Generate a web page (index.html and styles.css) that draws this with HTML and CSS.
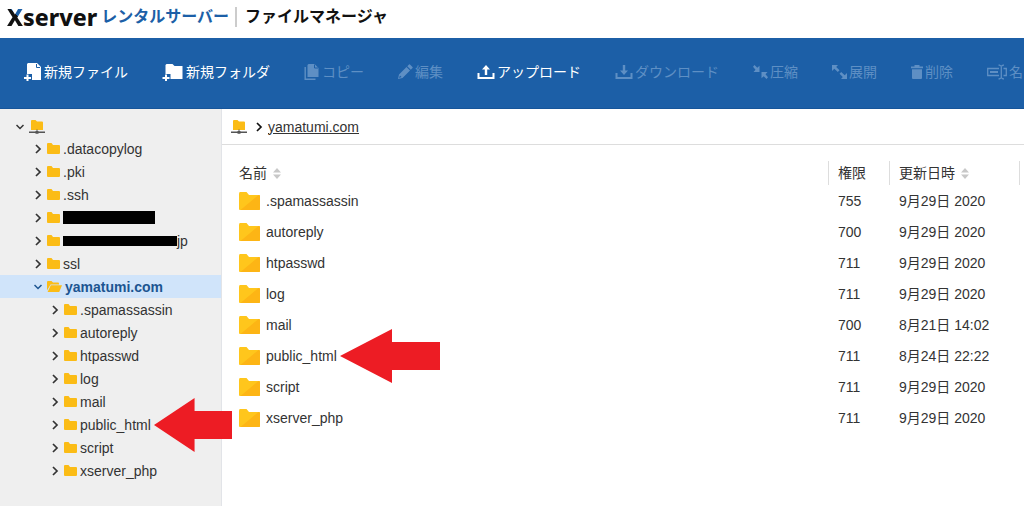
FILE: index.html
```
<!doctype html>
<html lang="ja">
<head>
  <meta charset="UTF-8">
  <title>ファイルマネージャ</title>
  <link rel="stylesheet" href="styles.css">
</head>
<body>
<svg class="defs" width="0" height="0" aria-hidden="true">
  <symbol id="i-folder" viewBox="0 0 13 11">
    <path d="M0 1Q0 0 1 0H4.500L6 2H12Q13 2 13 3V10Q13 11 12 11H1Q0 11 0 10Z" fill="#fbbc16"/>
  </symbol>
  <symbol id="i-open" viewBox="0 0 15 11">
    <path d="M0 1Q0 0 1 0H4.500L6 1.500H11Q12 1.500 12 2.500V3.500H3.500L0 9.500Z" fill="#fbbc16"/>
    <path d="M3.800 4.300H15L12.200 11H.6Z" fill="#fbbc16"/>
  </symbol>
  <symbol id="i-root" viewBox="0 0 16 14">
    <path d="M2 1Q2 0 3 0H6.500L8 1.500H13Q14 1.500 14 2.500V10H2Z" fill="#fbbc16"/>
    <path d="M7.500 9.500H8.500V11.500H7.500ZM0 11.500H16V13H0ZM6.500 11H9.500V13.700H6.500Z" fill="#555"/>
  </symbol>
  <symbol id="i-big" viewBox="0 0 21 18">
    <path d="M0 2Q0 0 1 0H7.500L10 3H20Q21 3 21 4V17Q21 18 20 18H1Q0 18 0 17Z" fill="#ffc61c"/>
    <path d="M21 4V17Q21 18 20 18H1.500L19.500 3Q21 3 21 4Z" fill="#fdb515"/>
  </symbol>
  <symbol id="i-right" viewBox="0 0 8 10">
    <path d="M2 1L6 5L2 9" fill="none" stroke="currentColor" stroke-width="1.700"/>
  </symbol>
  <symbol id="i-down" viewBox="0 0 8 10">
    <path d="M.5 3L4 6.500L7.500 3" fill="none" stroke="currentColor" stroke-width="1.500"/>
  </symbol>
  <symbol id="i-sort" viewBox="0 0 8 11">
    <path d="M0 4.500L4 0L8 4.500ZM0 6.500L4 11L8 6.500Z" fill="#c8c8c8"/>
  </symbol>
  <symbol id="i-arrow" viewBox="0 0 100 54" preserveAspectRatio="none">
    <path d="M0 27L52 0V13H100V41H52V54Z" fill="#ed1c24"/>
  </symbol>
</svg>

<header class="header">
  <span class="logo"><span class="logo-x">X</span>server</span>
  <span class="service">レンタルサーバー</span>
  <h1 class="title">ファイルマネージャ</h1>
</header>

<nav class="toolbar">
  <button type="button" class="tool">
    <svg width="18" height="18" viewBox="0 0 18 18"><path d="M4 0H13L17 4V17H8V11H3V1Z"/><path d="M12.500 1V4.500H16" fill="none" stroke="#1c5fa7"/><path d="M2.500 11.500H4.500V14H7V16H4.500V18H2.500V16H0V14H2.500Z"/></svg>
    新規ファイル
  </button>
  <button type="button" class="tool">
    <svg width="22" height="18" viewBox="0 0 21 18"><path d="M4 1H10L12 3H20V16H8V11H3V2Z"/><path d="M2.500 11.500H4.500V14H7V16H4.500V18H2.500V16H0V14H2.500Z"/></svg>
    新規フォルダ
  </button>
  <button type="button" class="tool" disabled>
    <svg width="16" height="16" viewBox="0 0 15 16"><path d="M4 0H10L14 4V13H3V1Z"/><path d="M.7 3V15.300H11" fill="none" stroke="currentColor" stroke-width="1.400"/><path d="M10 .5V4H13.500" fill="none" stroke="#1c5fa7"/></svg>
    コピー
  </button>
  <button type="button" class="tool" disabled>
    <svg width="15" height="16" viewBox="0 0 15 16"><path d="M0 15L1 10.500L8.500 3L12 6.500L4.500 14ZM9.300 2.200L11 .5Q11.500 0 12 .5L14.500 3Q15 3.500 14.500 4L12.800 5.700Z"/><path d="M1 14L2 11.500L3.500 13Z" fill="#1c5fa7"/></svg>
    編集
  </button>
  <button type="button" class="tool">
    <svg width="18" height="16" viewBox="0 0 17 16"><path d="M0 9H2V13H15V9H17V15H0ZM8.500 1L12.500 5.500H9.700V11H7.300V5.500H4.500Z"/></svg>
    アップロード
  </button>
  <button type="button" class="tool" disabled>
    <svg width="18" height="16" viewBox="0 0 17 16"><path d="M0 9H2V13H15V9H17V15H0ZM8.500 11L12.500 6.500H9.700V1H7.300V6.500H4.500Z"/></svg>
    ダウンロード
  </button>
  <button type="button" class="tool" disabled>
    <svg width="15" height="16" viewBox="0 0 15 16"><path d="M1.500 1L4.300 3.800L6.500 1.800V8H.5L2.500 5.700L0 2.800ZM13.500 15L10.700 12.200L8.500 14.200V8H14.500L12.500 10.300L15 13.200Z"/></svg>
    圧縮
  </button>
  <button type="button" class="tool" disabled>
    <svg width="15" height="16" viewBox="0 0 15 16"><path d="M0 1H6L4.200 3L7.500 6.300L5.800 8L2.300 4.800L0 7ZM15 15H9L10.800 13L7.500 9.700L9.200 8L12.700 11.200L15 9Z"/></svg>
    展開
  </button>
  <button type="button" class="tool" disabled>
    <svg width="12" height="16" viewBox="0 0 12 16"><path d="M0 2.500H3.500V1H8.500V2.500H12V4.300H0ZM1 5.300H11V14Q11 15 10 15H2Q1 15 1 14Z"/></svg>
    削除
  </button>
  <button type="button" class="tool" disabled>
    <svg width="20" height="16" viewBox="0 0 20 16"><path d="M12 4.500H.7V11.500H12M16.500 4.500H19.300V11.500H16.500M11.500 1.200H12.500L14.300 2.200L16 1.200H17M14.300 2V14M11.500 14.800H12.500L14.300 13.800L16 14.800H17" fill="none" stroke="currentColor" stroke-width="1.300"/><path d="M3 7H11V9H3Z"/></svg>
    名
  </button>
</nav>

<div class="content">
  <aside class="sidebar">
    <div class="node root">
      <svg class="chev"><use href="#i-down"/></svg>
      <svg class="root-icon"><use href="#i-root"/></svg>
    </div>
    <ul class="tree">
      <li class="node"><svg class="chev"><use href="#i-right"/></svg><svg class="folder"><use href="#i-folder"/></svg><a href="#">.datacopylog</a></li>
      <li class="node"><svg class="chev"><use href="#i-right"/></svg><svg class="folder"><use href="#i-folder"/></svg><a href="#">.pki</a></li>
      <li class="node"><svg class="chev"><use href="#i-right"/></svg><svg class="folder"><use href="#i-folder"/></svg><a href="#">.ssh</a></li>
      <li class="node"><svg class="chev"><use href="#i-right"/></svg><svg class="folder"><use href="#i-folder"/></svg><span class="mask"></span></li>
      <li class="node"><svg class="chev"><use href="#i-right"/></svg><svg class="folder"><use href="#i-folder"/></svg><span class="mask mask-long"></span><a href="#">jp</a></li>
      <li class="node"><svg class="chev"><use href="#i-right"/></svg><svg class="folder"><use href="#i-folder"/></svg><a href="#">ssl</a></li>
      <li class="node selected"><svg class="chev"><use href="#i-down"/></svg><svg class="folder open"><use href="#i-open"/></svg><a href="#">yamatumi.com</a></li>
    </ul>
    <ul class="tree sub">
      <li class="node"><svg class="chev"><use href="#i-right"/></svg><svg class="folder"><use href="#i-folder"/></svg><a href="#">.spamassassin</a></li>
      <li class="node"><svg class="chev"><use href="#i-right"/></svg><svg class="folder"><use href="#i-folder"/></svg><a href="#">autoreply</a></li>
      <li class="node"><svg class="chev"><use href="#i-right"/></svg><svg class="folder"><use href="#i-folder"/></svg><a href="#">htpasswd</a></li>
      <li class="node"><svg class="chev"><use href="#i-right"/></svg><svg class="folder"><use href="#i-folder"/></svg><a href="#">log</a></li>
      <li class="node"><svg class="chev"><use href="#i-right"/></svg><svg class="folder"><use href="#i-folder"/></svg><a href="#">mail</a></li>
      <li class="node"><svg class="chev"><use href="#i-right"/></svg><svg class="folder"><use href="#i-folder"/></svg><a href="#" class="marked">public_html<svg class="arrow arrow-small"><use href="#i-arrow"/></svg></a></li>
      <li class="node"><svg class="chev"><use href="#i-right"/></svg><svg class="folder"><use href="#i-folder"/></svg><a href="#">script</a></li>
      <li class="node"><svg class="chev"><use href="#i-right"/></svg><svg class="folder"><use href="#i-folder"/></svg><a href="#">xserver_php</a></li>
    </ul>
  </aside>

  <main class="main">
    <div class="path">
      <svg class="root-icon"><use href="#i-root"/></svg>
      <svg class="chev"><use href="#i-right"/></svg>
      <a href="#">yamatumi.com</a>
    </div>
    <table class="files">
      <thead>
        <tr>
          <th class="name"><span>名前 <svg class="sort"><use href="#i-sort"/></svg></span></th>
          <th class="perm"><span>権限</span></th>
          <th class="date"><span>更新日時 <svg class="sort"><use href="#i-sort"/></svg></span></th>
          <th class="more"><span></span></th>
        </tr>
      </thead>
      <tbody>
        <tr><td><a href="#"><svg class="big"><use href="#i-big"/></svg>.spamassassin</a></td><td>755</td><td>9月29日 2020</td><td></td></tr>
        <tr><td><a href="#"><svg class="big"><use href="#i-big"/></svg>autoreply</a></td><td>700</td><td>9月29日 2020</td><td></td></tr>
        <tr><td><a href="#"><svg class="big"><use href="#i-big"/></svg>htpasswd</a></td><td>711</td><td>9月29日 2020</td><td></td></tr>
        <tr><td><a href="#"><svg class="big"><use href="#i-big"/></svg>log</a></td><td>711</td><td>9月29日 2020</td><td></td></tr>
        <tr><td><a href="#"><svg class="big"><use href="#i-big"/></svg>mail</a></td><td>700</td><td>8月21日 14:02</td><td></td></tr>
        <tr><td><a href="#" class="marked"><svg class="big"><use href="#i-big"/></svg>public_html<svg class="arrow"><use href="#i-arrow"/></svg></a></td><td>711</td><td>8月24日 22:22</td><td></td></tr>
        <tr><td><a href="#"><svg class="big"><use href="#i-big"/></svg>script</a></td><td>711</td><td>9月29日 2020</td><td></td></tr>
        <tr><td><a href="#"><svg class="big"><use href="#i-big"/></svg>xserver_php</a></td><td>711</td><td>9月29日 2020</td><td></td></tr>
      </tbody>
    </table>
  </main>
</div>
</body>
</html>
```
FILE: styles.css
```
* {
  box-sizing: border-box;
}
body {
  margin: 0;
  min-height: 100vh;
  display: flex;
  flex-direction: column;
  background: #fff;
  color: #333;
  font: 14px/20px "Liberation Sans", "Noto Sans CJK JP", sans-serif;
}
a {
  color: inherit;
  text-decoration: none;
}
svg {
  flex: none;
}
.defs {
  position: absolute;
}

/* header */
.header {
  display: flex;
  align-items: center;
  height: 38px;
  padding: 0 7px 4px;
  white-space: nowrap;
}
.logo {
  color: #111;
  font: 800 23px/32px "Noto Sans", sans-serif;
}
.logo-x {
  background: linear-gradient(45deg, #111 58%, #1c5fa7 58%);
  -webkit-background-clip: text;
  background-clip: text;
  color: transparent;
}
.service {
  margin-left: 4px;
  color: #1c5fa7;
  font-size: 16px;
  font-weight: bold;
}
.title {
  margin: 0 0 0 6px;
  padding-left: 8px;
  border-left: 2px solid #ccc;
  color: #111;
  font-size: 16px;
  font-weight: bold;
}

/* toolbar */
.toolbar {
  display: flex;
  align-items: center;
  gap: 34px;
  height: 71px;
  padding: 0 0 2px 24px;
  overflow: hidden;
  background: #1c5fa7;
  border-bottom: 1px solid #16559a;
}
.tool {
  display: flex;
  flex: none;
  align-items: center;
  gap: 2px;
  padding: 0;
  border: 0;
  background: none;
  color: #fff;
  font: inherit;
  white-space: nowrap;
}
.tool svg {
  fill: currentColor;
}
.tool:disabled {
  color: #5e8fc4;
}

.content {
  display: flex;
  flex: 1;
}

/* folder tree */
.sidebar {
  position: relative;
  z-index: 1;
  flex: none;
  width: 222px;
  padding-top: 7px;
  background: #efefef;
  border-right: 1px solid #e2e4e8;
}
.tree {
  margin: 0;
  padding: 0;
  list-style: none;
}
.node {
  display: flex;
  align-items: center;
  height: 23px;
  padding-left: 34px;
}
.sub .node {
  padding-left: 51px;
}
.node.root {
  height: 21px;
  padding-left: 16px;
}
.chev {
  width: 8px;
  height: 10px;
  margin-right: 5px;
}
.folder {
  width: 13px;
  height: 11px;
  margin-right: 3px;
}
.open {
  width: 15px;
}
.root-icon {
  width: 16px;
  height: 14px;
}
.selected {
  background: #d0e4fa;
  color: #1c5591;
  font-weight: bold;
}
.mask {
  width: 92px;
  height: 13px;
  background: #000;
}
.mask-long {
  width: 114px;
  height: 10px;
}

/* red arrows over the list */
.marked {
  position: relative;
}
.arrow {
  position: absolute;
  left: 100%;
  top: 50%;
  width: 100px;
  height: 54px;
  margin-left: 3px;
  transform: translateY(-50%);
}
.arrow-small {
  width: 78px;
}

/* file list */
.main {
  flex: 1;
  min-width: 0;
}
.path {
  display: flex;
  align-items: center;
  height: 36px;
  padding-left: 9px;
  border-bottom: 1px solid #ddd;
}
.path .chev {
  margin: 0 5px 0 8px;
  color: #111;
}
.path a {
  text-decoration: underline;
}
.files {
  width: 100%;
  margin-top: 16px;
  border-collapse: collapse;
  table-layout: fixed;
}
.files th {
  padding: 0;
  font-weight: normal;
  text-align: left;
}
.files th span {
  display: flex;
  align-items: center;
  gap: 6px;
  height: 24px;
  padding-left: 9px;
  border-left: 1px solid #ddd;
}
.files .name span {
  padding-left: 17px;
  border-left: 0;
}
.files .more span {
  padding-left: 0;
}
.perm {
  width: 61px;
}
.date {
  width: 130px;
}
.more {
  width: 5px;
}
.sort {
  width: 8px;
  height: 11px;
}
.files td {
  height: 31px;
  padding: 0 0 0 10px;
}
.files td:first-child {
  padding-left: 17px;
}
.files td:last-child {
  padding: 0;
}
.files td a {
  display: inline-flex;
  align-items: center;
  gap: 6px;
  vertical-align: middle;
}
.big {
  width: 21px;
  height: 18px;
}
```
